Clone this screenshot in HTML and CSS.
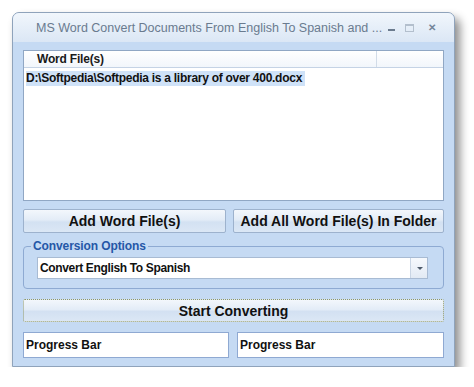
FILE: index.html
```
<!DOCTYPE html>
<html lang="en">
<head>
	<meta charset="utf-8" />
	<title>MS Word Convert Documents From English To Spanish</title>
	<link rel="stylesheet" href="styles.css">
</head>
<body>
<div class="window">
	<div class="titlebar">
		<span class="title">MS Word Convert Documents From English To Spanish and ...</span>
		<span class="controls">
			<span class="ctl-min"></span>
			<span class="ctl-max"></span>
			<span class="ctl-close">&#x2715;</span>
		</span>
	</div>
	<div class="client">
		<div class="listbox">
			<div class="list-head">
				<span class="col-name">Word File(s)</span>
				<span class="col-rest"></span>
			</div>
			<div class="list-row"><span class="selected">D:\Softpedia\Softpedia is a library of over 400.docx</span></div>
		</div>

		<div class="button-row">
			<button class="btn btn-add">Add Word File(s)</button>
			<button class="btn btn-folder">Add All Word File(s) In Folder</button>
		</div>

		<fieldset class="group">
			<legend>Conversion Options</legend>
			<div class="combo">
				<span class="combo-text">Convert English To Spanish</span>
				<span class="combo-arrow"></span>
			</div>
		</fieldset>

		<button class="btn btn-start">Start Converting</button>

		<div class="progress-row">
			<div class="progress progress-left">Progress Bar</div>
			<div class="progress progress-right">Progress Bar</div>
		</div>
	</div>
</div>
</body>
</html>
```

FILE: styles.css
```
*{
	font-family: "Liberation Sans", Arial, sans-serif;
	box-sizing: border-box;
}

body{
	margin: 0;
	background-color: #fff;
}

.window{
	margin: 12px 0 0 12px;
	width: 443px;
	height: 355px;
	border: 1px solid #8fa3bb;
	border-radius: 7px 7px 0 0;
	background-color: #c5daf3;
	box-shadow: 5px 6px 10px rgba(0,0,0,.45);
	display: flex;
	flex-direction: column;
}

.titlebar{
	height: 29px;
	border-radius: 6px 6px 0 0;
	background: linear-gradient(#f1f6fc, #dbe7f5);
	display: flex;
	align-items: center;
	padding-left: 23px;
	padding-right: 18px;
}

.title{
	font-size: 12.5px;
	color: #6a7b8f;
	flex: 1;
	white-space: nowrap;
}

.controls{
	display: flex;
	align-items: center;
}

.ctl-min{
	width: 7px;
	height: 2px;
	background-color: #6b7b8e;
	margin-top: 4px;
}

.ctl-max{
	width: 9px;
	height: 8px;
	border: 1px solid #b3bfcd;
	border-top-width: 2px;
	margin-left: 10px;
}

.ctl-close{
	font-size: 10px;
	font-weight: bold;
	color: #74859a;
	margin-left: 14px;
}

.client{
	flex: 1;
	padding: 8px 10px 8px 10px;
	display: flex;
	flex-direction: column;
}

.listbox{
	height: 151px;
	background-color: #fff;
	border: 1px solid #90a7c4;
}

.list-head{
	height: 17px;
	display: flex;
	background: linear-gradient(#fff, #f2f6fb);
	border-bottom: 1px solid #c5d3e5;
}

.col-name{
	width: 353px;
	border-right: 1px solid #d2dce8;
	padding-left: 13px;
	font-size: 12px;
	font-weight: bold;
	color: #1a1a1a;
	line-height: 16px;
	letter-spacing: -0.2px;
}

.list-row{
	height: 15px;
	padding-left: 2px;
}

.selected{
	display: inline-block;
	height: 15px;
	line-height: 15px;
	padding-right: 3px;
	background-color: #cfe2f8;
	font-size: 12px;
	font-weight: bold;
	color: #111;
	letter-spacing: -0.27px;
}

.button-row{
	margin-top: 8px;
	display: flex;
	gap: 7px;
}

.btn{
	height: 24px;
	border: 1px solid #9db2cd;
	border-radius: 2px;
	background: linear-gradient(#f3f7fc 0%, #e3ecf7 45%, #d3e1f2 55%, #dbe7f5 100%);
	font-size: 14px;
	font-weight: bold;
	color: #111;
	padding: 0;
}

.btn-add{
	width: 203px;
}

.btn-folder{
	width: 211px;
}

.group{
	margin: 6px 0 0 0;
	height: 50px;
	border: 1px solid #8eaad2;
	border-radius: 4px;
	padding: 4px 15px 0 13px;
}

.group legend{
	font-size: 12px;
	font-weight: bold;
	color: #2557a7;
	padding: 0 2px;
	margin-left: -6px;
	line-height: 14px;
	letter-spacing: -0.1px;
}

.combo{
	height: 22px;
	background-color: #fff;
	border: 1px solid #a8bbd3;
	display: flex;
	align-items: center;
}

.combo-text{
	flex: 1;
	padding-left: 2px;
	font-size: 12px;
	font-weight: bold;
	color: #111;
	letter-spacing: -0.35px;
}

.combo-arrow{
	width: 17px;
	height: 20px;
	border-left: 1px solid #c9d5e4;
	background: linear-gradient(#f6f9fd, #e2eaf4);
	position: relative;
}

.combo-arrow::after{
	content: "";
	position: absolute;
	left: 6px;
	top: 9px;
	border-left: 3px solid transparent;
	border-right: 3px solid transparent;
	border-top: 3px solid #4d5a6a;
}

.btn-start{
	margin-top: 10px;
	height: 23px;
	width: 100%;
	border: 1px dotted #8e9868;
	font-size: 14px;
}

.progress-row{
	margin-top: 10px;
	display: flex;
	gap: 8px;
}

.progress{
	height: 26px;
	background-color: #fff;
	border: 1px solid #8fa9d2;
	font-size: 12px;
	font-weight: bold;
	color: #111;
	padding-left: 2px;
	line-height: 24px;
}

.progress-left{
	width: 206px;
}

.progress-right{
	width: 207px;
}
```
